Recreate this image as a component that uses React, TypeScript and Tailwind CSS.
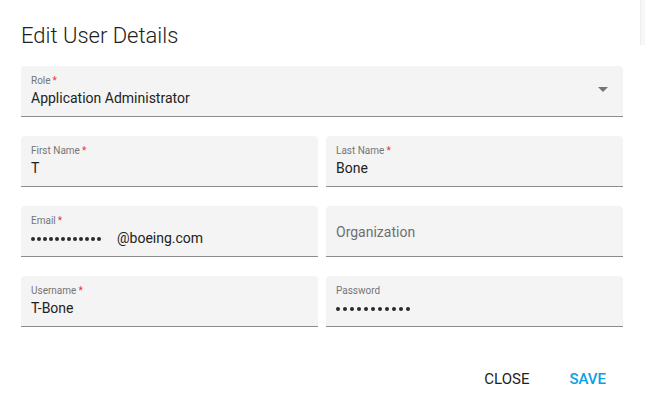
import React from 'react';

interface FieldProps {
  label: string;
  value?: React.ReactNode;
  required?: boolean;
  select?: boolean;
}

function Dots({ n, pitch }: { n: number; pitch: 'sm' | 'lg' }) {
  return (
    <span className="inline-flex items-center align-middle">
      {Array.from({ length: n }).map((_, i) => (
        <span
          key={i}
          className={`inline-block w-[4px] h-[4px] rounded-full bg-[#2a2a2a] ${pitch === 'sm' ? 'mr-[2px]' : 'mr-[3px]'}`}
        />
      ))}
    </span>
  );
}

function Field({ label, value, required, select }: FieldProps) {
  const empty = value === undefined;
  return (
    <div className="relative h-[51px] bg-[#f4f4f4] rounded-t-[4px] border-b border-[#8c8c8c] px-[10px]">
      {empty ? (
        <div className="pt-[16px] text-[14px] text-[#6f6f6f]">{label}</div>
      ) : (
        <>
          <div className="pt-[8px] text-[10px] leading-[14px] text-[#757575]">
            {label}
            {required && <span className="text-[#e53935] ml-[2px]">*</span>}
          </div>
          <div className="text-[14px] leading-[20px] text-[#222]">{value}</div>
        </>
      )}
      {select && (
        <svg className="absolute right-[15px] top-[21px]" width="10" height="5" viewBox="0 0 10 5">
          <path d="M0 0h10L5 5z" fill="#757575" />
        </svg>
      )}
    </div>
  );
}

export default function App() {
  return (
    <div className="relative w-[645px] h-[411px] bg-white font-['Roboto',sans-serif]">
      <div className="absolute right-0 top-0 w-[5px] h-[45px] bg-[#f7f7f7] border-l border-[#eeeeee]" />
      <div className="px-[21px] pt-[22px] w-[644px]">
        <h1 className="text-[22px] leading-[28px] font-light text-[#222]">Edit User Details</h1>
        <div className="mt-[16px] flex flex-col gap-[19px]">
          <Field label="Role" value="Application Administrator" required select />
          <div className="grid grid-cols-2 gap-[8px]">
            <Field label="First Name" value="T" required />
            <Field label="Last Name" value="Bone" required />
          </div>
          <div className="grid grid-cols-2 gap-[8px]">
            <Field
              label="Email"
              value={
                <>
                  <Dots n={12} pitch="sm" />
                  <span className="ml-[14px]">@boeing.com</span>
                </>
              }
              required
            />
            <Field label="Organization" />
          </div>
          <div className="grid grid-cols-2 gap-[8px]">
            <Field label="Username" value="T-Bone" required />
            <Field label="Password" value={<Dots n={11} pitch="lg" />} />
          </div>
        </div>
        <div className="mt-[34px] flex justify-end gap-[8px] pr-[1px]">
          <button className="px-[16px] h-[36px] text-[15px] font-normal text-[#222]">CLOSE</button>
          <button className="px-[16px] h-[36px] text-[15px] font-medium text-[#0aa0e6]">SAVE</button>
        </div>
      </div>
    </div>
  );
}
